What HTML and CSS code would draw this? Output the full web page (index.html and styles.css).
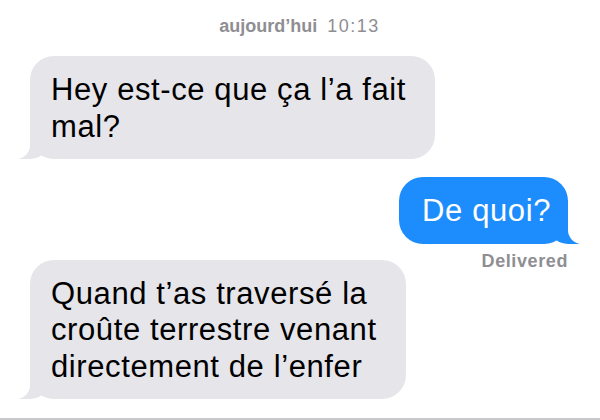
FILE: index.html
```html
<!DOCTYPE html>
<html lang="fr">
<head>
<meta charset="utf-8">
<title>Messages</title>
<link rel="stylesheet" href="styles.css">
</head>
<body>
<div class="chat">
  <div class="stamp"><span class="day">aujourd’hui</span><span class="time">10:13</span></div>
  <div class="row row-in"><div class="bubble in">Hey est-ce que ça l’a fait<br>mal?</div></div>
  <div class="row row-out"><div class="bubble out">De quoi?</div></div>
  <div class="status">Delivered</div>
  <div class="row row-in row-last"><div class="bubble in">Quand t’as traversé la<br>croûte terrestre venant<br>directement de l’enfer</div></div>
</div>
</body>
</html>
```
FILE: styles.css
```css
html, body {
  margin: 0;
  padding: 0;
  background: #ffffff;
}
body {
  font-family: "Liberation Sans", Arial, sans-serif;
}
.chat {
  box-sizing: border-box;
  width: 600px;
  height: 420px;
  padding: 16px 32px 0 30px;
  border-bottom: 2px solid #c8c8cc;
  display: flex;
  flex-direction: column;
  overflow: hidden;
}
.stamp {
  text-align: center;
  color: #8e8e93;
  font-size: 18px;
  line-height: 21px;
  padding-left: 1px;
}
.day {
  font-weight: 700;
  letter-spacing: 0;
}
.time {
  font-weight: 400;
  letter-spacing: 1.5px;
  margin-left: 10px;
}
.row {
  display: flex;
}
.row-in {
  justify-content: flex-start;
  margin-top: 19px;
}
.row-out {
  justify-content: flex-end;
  margin-top: 18px;
}
.row-last {
  margin-top: -11px;
}
.bubble {
  position: relative;
  font-size: 31px;
  line-height: 36.5px;
  letter-spacing: 0.6px;
  border-radius: 24px;
  padding: 16px 29px 14px 21px;
}
.bubble.in {
  background: #e5e5ea;
  color: #000000;
}
.bubble.out {
  background: #1d8dfd;
  color: #ffffff;
  padding: 16px 17px 14px 23px;
}
.bubble::before,
.bubble::after {
  content: "";
  position: absolute;
  bottom: 0;
  height: 26px;
}
.bubble.in::before {
  left: -10px;
  width: 28px;
  background: #e5e5ea;
  border-bottom-right-radius: 18px 15px;
}
.bubble.in::after {
  left: -30px;
  width: 30px;
  background: #ffffff;
  border-bottom-right-radius: 14px;
}
.bubble.out::before {
  right: -11px;
  width: 29px;
  background: #1d8dfd;
  border-bottom-left-radius: 18px 15px;
}
.bubble.out::after {
  right: -30px;
  width: 30px;
  background: #ffffff;
  border-bottom-left-radius: 14px;
}
.status {
  align-self: flex-end;
  color: #8e8e93;
  font-size: 18px;
  font-weight: 700;
  letter-spacing: 0.6px;
  line-height: 20px;
  margin-top: 7px;
}
```
